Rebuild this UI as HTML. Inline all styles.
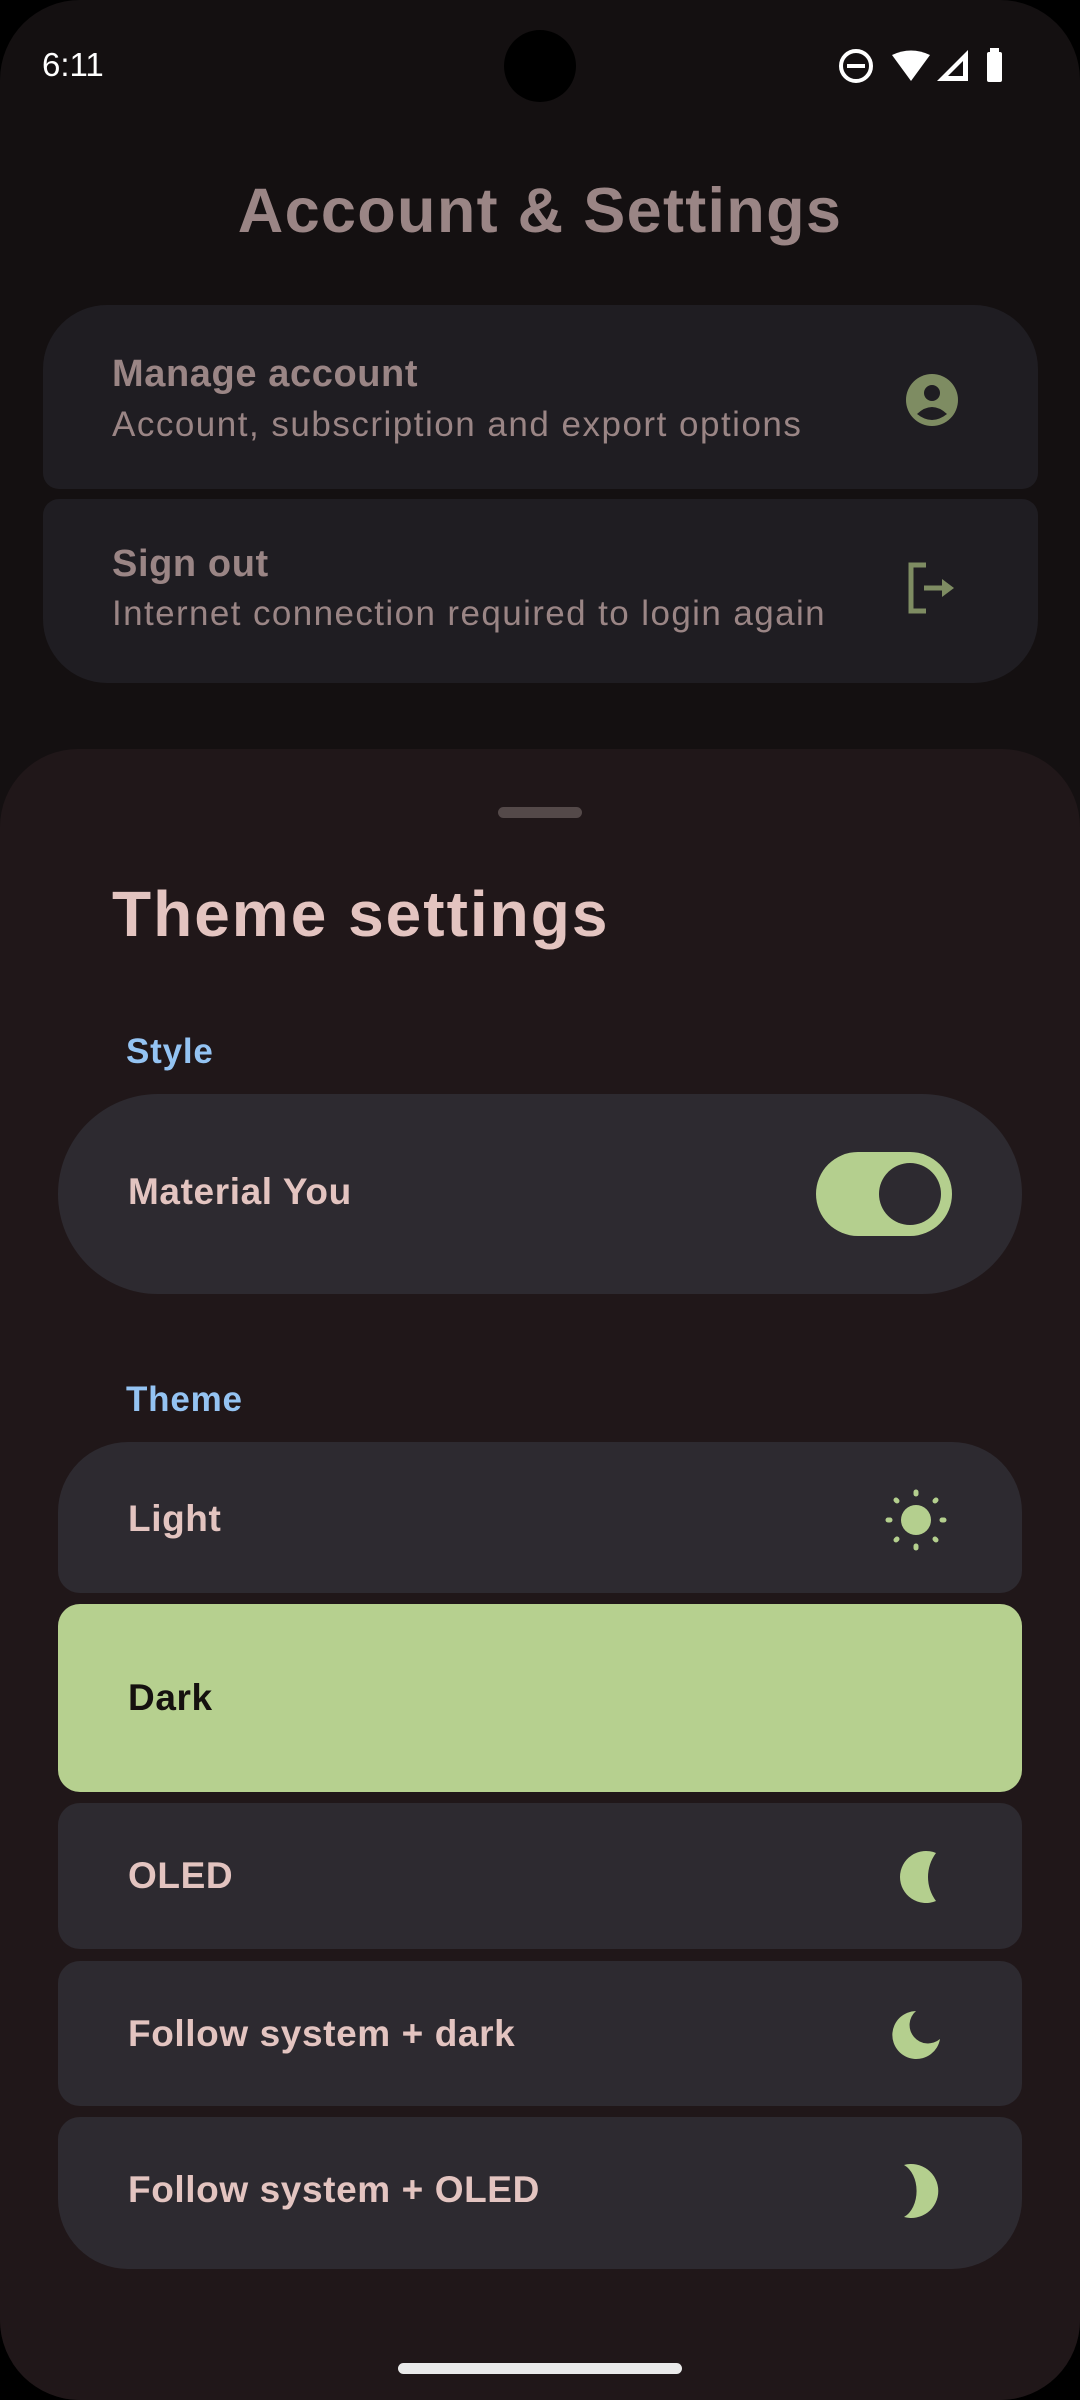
<!DOCTYPE html>
<html><head><meta charset="utf-8"><style>
*{margin:0;padding:0;box-sizing:border-box}
html,body{width:1080px;height:2400px;background:#000;overflow:hidden}
body{font-family:"Liberation Sans",sans-serif;position:relative}
.screen{position:absolute;left:0;top:0;width:1080px;height:2400px;background:#141011;border-radius:80px;overflow:hidden}
.abs{position:absolute}
.t{position:absolute;white-space:nowrap;letter-spacing:0.8px}
.card{position:absolute;background:#1f1d22}
.item{position:absolute;left:58px;width:964px;background:#2d2a30;border-radius:22px}
.lbl{position:absolute;left:70px;font-size:37px;font-weight:bold;color:#e3c4c0;white-space:nowrap;letter-spacing:0.6px}
</style></head><body>
<div class="screen">
  <div class="t" style="left:42px;top:46px;font-size:33px;color:#fff;letter-spacing:0">6:11</div>
  <div class="abs" style="left:504px;top:30px;width:72px;height:72px;border-radius:50%;background:#000"></div>
  <svg class="abs" style="left:836px;top:46px" width="170" height="40" viewBox="0 0 170 40">
    <circle cx="20" cy="20" r="15" fill="none" stroke="#fff" stroke-width="4"/>
    <rect x="11" y="18" width="18" height="4" fill="#fff"/>
    <path d="M56 9 Q75 0 94 9 L75 35 Z" fill="#fff"/>
    <path d="M132 4 L132 35 L101 35 Z M127 15 L112 30 L127 30 Z" fill="#fff" fill-rule="evenodd"/>
    <rect x="151" y="6" width="15" height="30" rx="2" fill="#fff"/>
    <rect x="154" y="2" width="9" height="5" fill="#fff"/>
  </svg>
  <div class="t" style="left:0;width:1080px;text-align:center;top:175px;font-size:63px;font-weight:bold;color:#9a8585;letter-spacing:1.3px">Account &amp; Settings</div>

  <div class="card" style="left:43px;top:305px;width:995px;height:184px;border-radius:64px 64px 16px 16px"></div>
  <div class="t" style="left:112px;top:353px;font-size:38px;font-weight:bold;color:#9a8585;letter-spacing:0.6px">Manage account</div>
  <div class="t" style="left:112px;top:405px;font-size:35px;color:#9a8585;letter-spacing:1.5px">Account, subscription and export options</div>
  <svg class="abs" style="left:906px;top:374px" width="52" height="52" viewBox="0 0 52 52">
    <circle cx="26" cy="26" r="26" fill="#7e8c62"/>
    <circle cx="26" cy="19" r="8" fill="#1f1d22"/>
    <path d="M11 40 Q26 26 41 40 Q26 52 11 40Z" fill="#1f1d22"/>
  </svg>
  <div class="card" style="left:43px;top:499px;width:995px;height:184px;border-radius:16px 16px 64px 64px"></div>
  <div class="t" style="left:112px;top:543px;font-size:38px;font-weight:bold;color:#9a8585;letter-spacing:0.6px">Sign out</div>
  <div class="t" style="left:112px;top:594px;font-size:35px;color:#9a8585;letter-spacing:1.4px">Internet connection required to login again</div>
  <svg class="abs" style="left:906px;top:562px" width="52" height="52" viewBox="0 0 52 52">
    <path d="M20 3 H5 V49 H20" fill="none" stroke="#7e8c62" stroke-width="5"/>
    <path d="M18 26 H40" stroke="#7e8c62" stroke-width="5"/>
    <path d="M36 17 L48 26 L36 35 Z" fill="#7e8c62"/>
  </svg>

  <div class="abs" style="left:0;top:749px;width:1080px;height:1700px;background:#201719;border-radius:78px 78px 0 0"></div>
  <div class="abs" style="left:498px;top:807px;width:84px;height:11px;border-radius:6px;background:#544949"></div>
  <div class="t" style="left:112px;top:877px;font-size:64px;font-weight:bold;color:#e3c4c0;letter-spacing:2px">Theme settings</div>
  <div class="t" style="left:126px;top:1032px;font-size:35px;font-weight:bold;color:#94c3f2">Style</div>
  <div class="item" style="top:1094px;height:200px;border-radius:100px">
    <div class="lbl" style="top:77px">Material You</div>
    <div class="abs" style="left:758px;top:58px;width:136px;height:84px;border-radius:42px;background:#b4cf8e"></div>
    <div class="abs" style="left:821px;top:69px;width:62px;height:62px;border-radius:50%;background:#2d2a30"></div>
  </div>
  <div class="t" style="left:126px;top:1380px;font-size:35px;font-weight:bold;color:#94c3f2">Theme</div>

  <div class="item" style="top:1442px;height:151px;border-radius:70px 70px 22px 22px">
    <div class="lbl" style="top:56px">Light</div>
    <svg class="abs" style="left:826px;top:46px" width="64" height="64" viewBox="0 0 64 64">
      <circle cx="32" cy="32" r="15" fill="#b4cf8e"/>
      <g stroke="#b4cf8e" stroke-width="5" stroke-linecap="round">
        <line x1="32" y1="4" x2="32" y2="6"/><line x1="32" y1="58" x2="32" y2="60"/>
        <line x1="4" y1="32" x2="6" y2="32"/><line x1="58" y1="32" x2="60" y2="32"/>
        <line x1="12" y1="12" x2="13" y2="13"/><line x1="51" y1="51" x2="52" y2="52"/>
        <line x1="12" y1="52" x2="13" y2="51"/><line x1="51" y1="13" x2="52" y2="12"/>
      </g>
    </svg>
  </div>
  <div class="item" style="top:1604px;height:188px;background:#b6d08f">
    <div class="lbl" style="top:73px;color:#15110f">Dark</div>
  </div>
  <div class="item" style="top:1803px;height:146px">
    <div class="lbl" style="top:52px">OLED</div>
    <svg class="abs" style="left:834px;top:46px" width="56" height="56" viewBox="0 0 56 56">
      <path d="M44 4 A26 26 0 1 0 44 52 A40 40 0 0 1 44 4Z" fill="#b4cf8e"/>
    </svg>
  </div>
  <div class="item" style="top:1961px;height:145px">
    <div class="lbl" style="top:52px">Follow system + dark</div>
    <svg class="abs" style="left:832px;top:46px" width="56" height="56" viewBox="0 0 56 56">
      <path d="M26 4 A24 24 0 1 0 50 32 A18 18 0 0 1 26 4Z" fill="#b4cf8e"/>
    </svg>
  </div>
  <div class="item" style="top:2117px;height:152px;border-radius:22px 22px 70px 70px">
    <div class="lbl" style="top:52px">Follow system + OLED</div>
    <svg class="abs" style="left:836px;top:44px" width="56" height="60" viewBox="0 0 56 60">
      <path d="M10 4 A27 27 0 1 1 10 56 A20 28 0 0 0 10 4Z" fill="#b4cf8e"/>
    </svg>
  </div>

  <div class="abs" style="left:398px;top:2363px;width:284px;height:11px;border-radius:6px;background:#eaeaea"></div>
</div>
</body></html>
